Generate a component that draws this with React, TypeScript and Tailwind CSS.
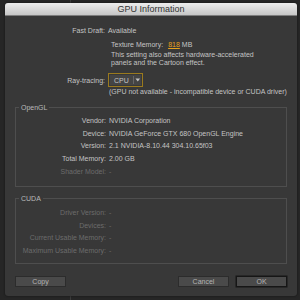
import React from "react";

function Row({ label, value, dim, box }: { label: string; value: string; dim?: boolean; box?: boolean }) {
  return (
    <div className={`flex h-[12.75px] items-center ${dim ? "text-[#6c6c6c]" : "text-[#c4c4c4]"}`}>
      <span className={`${box ? "w-[90px]" : "w-[100px]"} shrink-0 text-right whitespace-nowrap`}>{label}</span>
      <span className="ml-[3px] whitespace-nowrap">{value}</span>
    </div>
  );
}

function Group({ title, children, className }: { title: string; children: React.ReactNode; className: string }) {
  return (
    <div className={`relative mx-[10px] border border-[#4e4e4e] ${className}`}>
      <span className="absolute -top-[6px] left-[3px] bg-[#383838] px-[2px] leading-[11px] text-[#b8b8b8]">{title}</span>
      {children}
    </div>
  );
}

function Btn({ label, primary, className }: { label: string; primary?: boolean; className?: string }) {
  return (
    <button
      className={`flex h-[11px] w-[51px] items-center justify-center bg-[#4a4a4a] text-[#b4b4b4] ${
        primary ? "border border-[#161616] shadow-[0_0_0_0.5px_#161616]" : "border border-[#2c2c2c]"
      } ${className ?? ""}`}
    >
      {label}
    </button>
  );
}

export default function App() {
  return (
    <div
      className="relative h-[300px] w-[300px] overflow-hidden bg-[#262626] pl-[5px] pt-[3px] text-[7px] leading-none"
      style={{ fontFamily: '"Liberation Sans", Arial, sans-serif' }}
    >
      <div className="absolute left-[70px] top-0 h-full w-[1px] bg-[#3c3c3c]" />
      <div className="relative flex h-[293px] w-[292px] flex-col overflow-hidden rounded-[3px] bg-[#383838] shadow-[0_0_2px_#111]">
        <div className="flex h-[13px] shrink-0 items-center justify-center border-b border-[#7d7d7d] bg-gradient-to-b from-[#ededed] to-[#c6c6c6] text-[9px] text-[#333]">
          GPU Information
        </div>

        <div className="mt-[8px] flex h-[12px] items-center text-[#c4c4c4]">
          <span className="w-[100px] text-right">Fast Draft:</span>
          <span className="ml-[3px]">Available</span>
        </div>

        <div className="ml-[106px] mt-[2px] text-[#c4c4c4]">
          <div className="flex h-[12px] items-center">
            <span>Texture Memory:</span>
            <span className="ml-[5px] text-[#e6a21c] underline decoration-[#e6a21c] underline-offset-1">818</span>
            <span className="ml-[2px]">MB</span>
          </div>
          <div className="mt-[1px] leading-[8px]">
            This setting also affects hardware-accelerated
            <br />
            panels and the Cartoon effect.
          </div>
        </div>

        <div className="mt-[6px] flex h-[14px] items-center text-[#c4c4c4]">
          <span className="w-[100px] text-right">Ray-tracing:</span>
          <div className="ml-[3px] flex h-[14px] w-[35px] items-center border border-[#9a7a1e] p-[1px]">
            <div className="flex h-full w-full items-center bg-[#444]">
              <span className="ml-[4px] w-[20px]">CPU</span>
              <span className="h-[8px] w-px bg-[#666]" />
              <svg width="6" height="4" viewBox="0 0 6 4" className="ml-[2px]">
                <path d="M0.5 0.5 L5.5 0.5 L3 3.5 Z" fill="#c4c4c4" />
              </svg>
            </div>
          </div>
        </div>
        <div className="ml-[104px] mt-[1px] h-[9px] whitespace-nowrap text-[#c4c4c4]">
          (GPU not available - incompatible device or CUDA driver)
        </div>

        <Group title="OpenGL" className="mt-[10px] h-[80px] pt-[6px]">
          <Row box label="Vendor:" value="NVIDIA Corporation" />
          <Row box label="Device:" value="NVIDIA GeForce GTX 680 OpenGL Engine" />
          <Row box label="Version:" value="2.1 NVIDIA-8.10.44 304.10.65f03" />
          <Row box label="Total Memory:" value="2.00 GB" />
          <Row box dim label="Shader Model:" value="-" />
        </Group>

        <Group title="CUDA" className="mt-[11px] h-[66px] pt-[7px]">
          <Row box dim label="Driver Version:" value="-" />
          <Row box dim label="Devices:" value="-" />
          <Row box dim label="Current Usable Memory:" value="-" />
          <Row box dim label="Maximum Usable Memory:" value="-" />
        </Group>

        <div className="mx-[10px] mt-[12px] flex items-center">
          <Btn label="Copy" />
          <div className="flex-1" />
          <Btn label="Cancel" />
          <Btn label="OK" primary className="ml-[7px]" />
        </div>
      </div>
    </div>
  );
}
